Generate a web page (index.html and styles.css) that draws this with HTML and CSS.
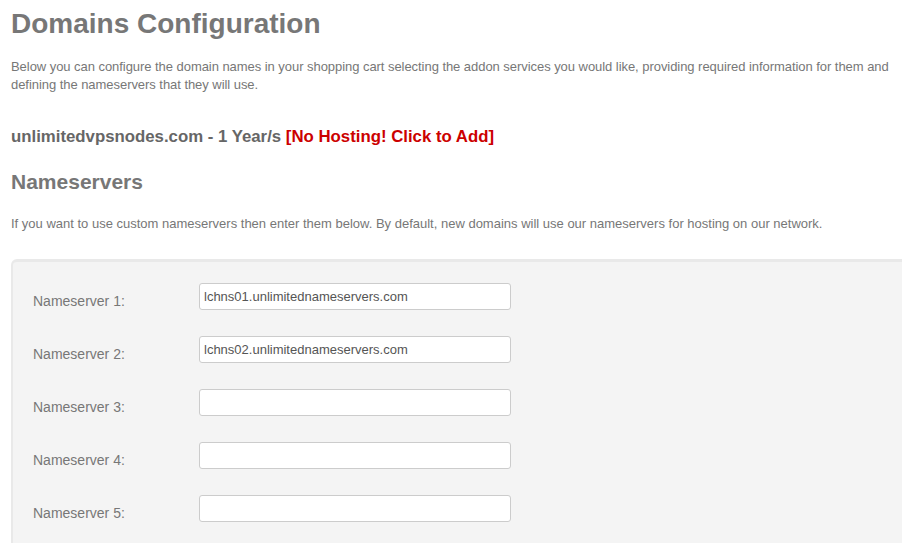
FILE: index.html
```html
<!DOCTYPE html>
<html>
<head>
<meta charset="utf-8">
<link rel="stylesheet" href="styles.css">
</head>
<body>
<div class="page">
  <h1 class="title">Domains Configuration</h1>
  <p class="intro">Below you can configure the domain names in your shopping cart selecting the addon services you would like, providing required information for them and defining the nameservers that they will use.</p>
  <h3 class="domain">unlimitedvpsnodes.com - 1 Year/s <a class="nohost" href="#">[No Hosting! Click to Add]</a></h3>
  <h2 class="section">Nameservers</h2>
  <p class="note">If you want to use custom nameservers then enter them below. By default, new domains will use our nameservers for hosting on our network.</p>
  <div class="panel">
    <div class="row"><label class="lbl">Nameserver 1:</label><input class="field" type="text" value="lchns01.unlimitednameservers.com"></div>
    <div class="row"><label class="lbl">Nameserver 2:</label><input class="field" type="text" value="lchns02.unlimitednameservers.com"></div>
    <div class="row"><label class="lbl">Nameserver 3:</label><input class="field" type="text" value=""></div>
    <div class="row"><label class="lbl">Nameserver 4:</label><input class="field" type="text" value=""></div>
    <div class="row"><label class="lbl">Nameserver 5:</label><input class="field" type="text" value=""></div>
  </div>
</div>
</body>
</html>
```
FILE: styles.css
```css
html, body {
  margin: 0;
  padding: 0;
  background: #fff;
  overflow: hidden;
}
body {
  font-family: "Liberation Sans", Arial, sans-serif;
  color: #777;
}
.page {
  padding: 0 0 0 11px;
}
.title {
  margin: 0;
  padding-top: 8px;
  font-size: 28px;
  line-height: 32px;
  font-weight: bold;
  color: #777;
}
.intro {
  margin: 18px 0 0 0;
  font-size: 13px;
  line-height: 18px;
  color: #777;
  letter-spacing: -0.05px;
}
.domain {
  margin: 32px 0 0 0;
  font-size: 16.8px;
  line-height: 22px;
  font-weight: bold;
  color: #666;
}
.nohost {
  color: #cc0000;
  text-decoration: none;
}
.section {
  margin: 22px 0 0 0;
  font-size: 21px;
  line-height: 24px;
  font-weight: bold;
  color: #777;
}
.note {
  margin: 21px 0 0 0;
  font-size: 13px;
  line-height: 18px;
  color: #777;
}
.panel {
  margin-top: 26px;
  background: #f4f4f4;
  border-top: 3px solid #e9e9e9;
  border-left: 2px solid #e9e9e9;
  border-top-left-radius: 6px;
  padding: 21px 0 30px 20px;
  display: flex;
  flex-direction: column;
  gap: 26px;
  height: 400px;
}
.row {
  display: flex;
  align-items: center;
}
.lbl {
  width: 166px;
  font-size: 14px;
  color: #777;
  padding-top: 8px;
}
.field {
  box-sizing: border-box;
  width: 312px;
  height: 27px;
  margin: 0;
  border: 1px solid #ccc;
  border-radius: 3px;
  background: #fff;
  padding: 0 4px;
  font-family: "Liberation Sans", Arial, sans-serif;
  font-size: 13px;
  color: #555;
}
```
